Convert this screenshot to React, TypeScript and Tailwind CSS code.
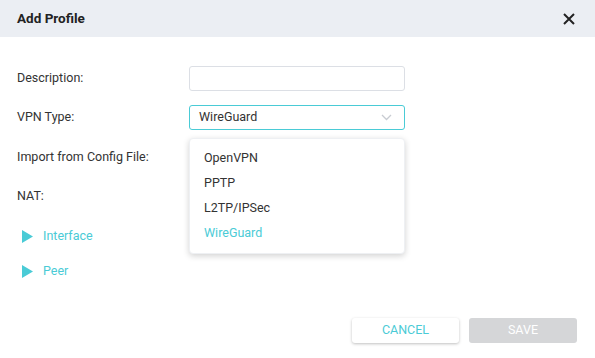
import React from "react";

const teal = "text-[#4acbd6]";

function Label({ children }: { children: React.ReactNode }) {
  return <div className="w-[172px] shrink-0 text-[12.5px] text-[#333]">{children}</div>;
}

function Section({ title }: { title: string }) {
  return (
    <div className="flex items-center gap-[10px] h-[24px]">
      <svg width="11" height="13" viewBox="0 0 11 13">
        <path d="M0 0 L11 6.5 L0 13 Z" fill="#4acbd6" />
      </svg>
      <span className={`text-[12.5px] ${teal}`}>{title}</span>
    </div>
  );
}

export default function App() {
  const options = ["OpenVPN", "PPTP", "L2TP/IPSec", "WireGuard"];
  return (
    <div className="w-[595px] h-[358px] bg-white font-['Roboto',sans-serif] flex flex-col">
      <div className="h-[37px] bg-[#ebeef3] flex items-center justify-between pl-[17px] pr-[20px]">
        <span className="text-[13.5px] font-bold text-[#222] -mt-[1px]">Add Profile</span>
        <svg width="12" height="12" viewBox="0 0 12 12">
          <path d="M1 1 L11 11 M11 1 L1 11" stroke="#222" strokeWidth="2" />
        </svg>
      </div>

      <div className="flex-1 px-[17px] pt-[29px] flex flex-col">
        <div className="flex items-center h-[24px]">
          <Label>Description:</Label>
          <div className="w-[216px] h-[25px] border border-[#dcdfe5] rounded-[3px]" />
        </div>

        <div className="flex items-center h-[24px] mt-[15px]">
          <Label>VPN Type:</Label>
          <div className="relative w-[216px] h-[25px]">
            <div className="h-full border border-[#4acbd6] rounded-[3px] flex items-center justify-between pl-[9px] pr-[12px] text-[12.5px] text-[#333]">
              <span>WireGuard</span>
              <svg width="11" height="7" viewBox="0 0 11 7">
                <path d="M1 1 L5.5 5.5 L10 1" stroke="#c8ccd2" strokeWidth="1.3" fill="none" />
              </svg>
            </div>
            <div className="absolute left-0 top-[33px] w-[216px] bg-white rounded-[4px] shadow-[0_2px_6px_rgba(0,0,0,0.18)] border border-[#eef0f3] py-[7px] z-10">
              {options.map((o) => (
                <div
                  key={o}
                  className={`h-[25px] flex items-center pl-[14px] text-[12.5px] ${o === "WireGuard" ? teal : "text-[#333]"}`}
                >
                  {o}
                </div>
              ))}
            </div>
          </div>
        </div>

        <div className="flex items-center h-[24px] mt-[16px]">
          <Label>Import from Config File:</Label>
        </div>

        <div className="flex items-center h-[24px] mt-[15px]">
          <Label>NAT:</Label>
        </div>

        <div className="mt-[16px] pl-[5px] flex flex-col gap-[11px]">
          <Section title="Interface" />
          <Section title="Peer" />
        </div>

        <div className="mt-auto mb-[15px] flex justify-end gap-[10px] pr-[1px]">
          <button className="w-[107px] h-[25px] bg-white rounded-[3px] shadow-[0_1px_3px_rgba(0,0,0,0.25)] text-[12.5px] text-[#4acbd6]">
            CANCEL
          </button>
          <button className="w-[108px] h-[25px] bg-[#d5d6d8] rounded-[3px] text-[12.5px] text-white">
            SAVE
          </button>
        </div>
      </div>
    </div>
  );
}
